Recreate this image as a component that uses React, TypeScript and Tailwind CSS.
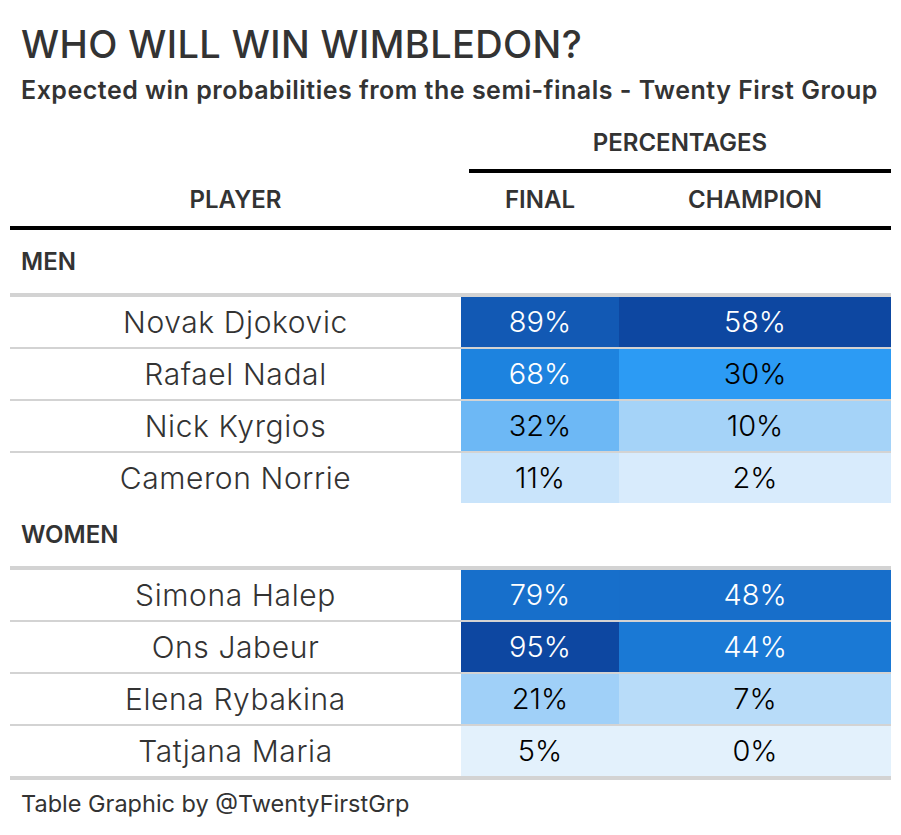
import React from "react";

type Row = {
  name: string;
  final: string;
  finalBg: string;
  finalText: string;
  champ: string;
  champBg: string;
  champText: string;
};

const men: Row[] = [
  { name: "Novak Djokovic", final: "89%", finalBg: "bg-[#1259b4]", finalText: "text-white", champ: "58%", champBg: "bg-[#0d47a1]", champText: "text-white" },
  { name: "Rafael Nadal", final: "68%", finalBg: "bg-[#1d83df]", finalText: "text-white", champ: "30%", champBg: "bg-[#2c9bf4]", champText: "text-black" },
  { name: "Nick Kyrgios", final: "32%", finalBg: "bg-[#6db8f5]", finalText: "text-black", champ: "10%", champBg: "bg-[#a5d3f8]", champText: "text-black" },
  { name: "Cameron Norrie", final: "11%", finalBg: "bg-[#c9e4fb]", finalText: "text-black", champ: "2%", champBg: "bg-[#d8ebfc]", champText: "text-black" },
];

const women: Row[] = [
  { name: "Simona Halep", final: "79%", finalBg: "bg-[#176fcb]", finalText: "text-white", champ: "48%", champBg: "bg-[#176eca]", champText: "text-white" },
  { name: "Ons Jabeur", final: "95%", finalBg: "bg-[#0d47a1]", finalText: "text-white", champ: "44%", champBg: "bg-[#1a79d5]", champText: "text-white" },
  { name: "Elena Rybakina", final: "21%", finalBg: "bg-[#a0d0f8]", finalText: "text-black", champ: "7%", champBg: "bg-[#b8dcf9]", champText: "text-black" },
  { name: "Tatjana Maria", final: "5%", finalBg: "bg-[#e3f1fc]", finalText: "text-black", champ: "0%", champBg: "bg-[#e3f1fc]", champText: "text-black" },
];

function Group({ label, rows, last }: { label: string; rows: Row[]; last?: boolean }) {
  return (
    <div className={last ? "border-b-4 border-[#d3d3d3]" : ""}>
      <div className="h-[67px] flex items-center pl-[11px] text-[24px] font-semibold text-[#333] border-b-4 border-[#d3d3d3]">
        {label}
      </div>
      {rows.map((r, i) => (
        <div
          key={r.name}
          className={
            "grid grid-cols-[451px_158px_272px] h-[50px] box-content text-[29px] font-light " +
            (i > 0 ? "border-t-2 border-[#d3d3d3]" : "")
          }
        >
          <div className="flex items-center justify-center text-[30px] tracking-[0.02em] text-[#333]">{r.name}</div>
          <div className={`flex items-center justify-center ${r.finalBg} ${r.finalText}`}>{r.final}</div>
          <div className={`flex items-center justify-center ${r.champBg} ${r.champText}`}>{r.champ}</div>
        </div>
      ))}
    </div>
  );
}

export default function App() {
  return (
    <div className="w-[901px] h-[835px] bg-white px-[10px] font-['Inter',sans-serif]">
      <div className="pl-[11px] pt-[22px] text-[#333]">
        <h1 className="text-[38px] leading-[44px] font-medium tracking-[0.01em]">WHO WILL WIN WIMBLEDON?</h1>
        <p className="text-[25px] leading-[30px] font-semibold mt-[9px] tracking-[0.02em]">
          Expected win probabilities from the semi-finals - Twenty First Group
        </p>
      </div>

      <div className="grid grid-cols-[451px_430px] border-b-4 border-black text-[24px] font-semibold text-[#333]">
        <div className="flex items-end">
          <div className="h-[53px] w-full flex items-center justify-center">PLAYER</div>
        </div>
        <div>
          <div className="ml-[8px] h-[68px] pt-[26px] leading-[24px] text-center border-b-4 border-black">
            PERCENTAGES
          </div>
          <div className="grid grid-cols-[158px_272px] h-[53px] items-center text-center">
            <div>FINAL</div>
            <div>CHAMPION</div>
          </div>
        </div>
      </div>

      <Group label="MEN" rows={men} />
      <Group label="WOMEN" rows={women} last />

      <div className="pl-[11px] pt-[12px] leading-[24px] text-[23.5px] text-[#333]">
        Table Graphic by @TwentyFirstGrp
      </div>
    </div>
  );
}
